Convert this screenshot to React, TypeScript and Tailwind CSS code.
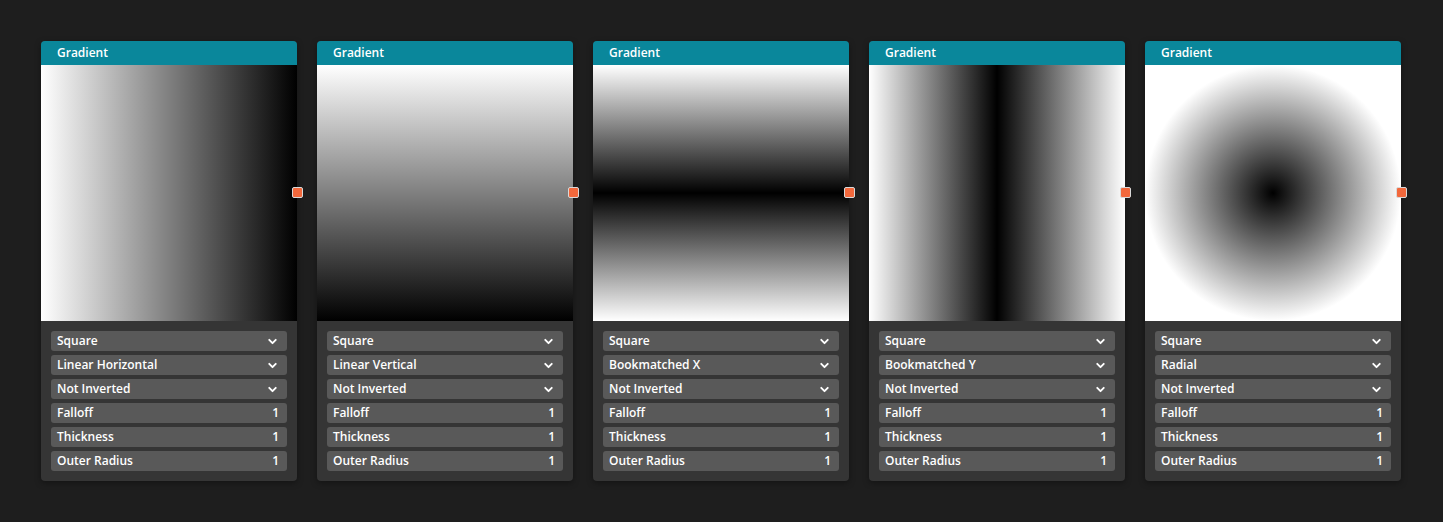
import { ChevronDown } from "lucide-react";

type Node = {
  shape: string;
  mode: string;
  preview: string;
};

const NODES: Node[] = [
  {
    shape: "Square",
    mode: "Linear Horizontal",
    preview: "bg-[linear-gradient(to_right,#ffffff,#000000)]",
  },
  {
    shape: "Square",
    mode: "Linear Vertical",
    preview: "bg-[linear-gradient(to_bottom,#ffffff,#000000)]",
  },
  {
    shape: "Square",
    mode: "Bookmatched X",
    preview: "bg-[linear-gradient(to_bottom,#ffffff,#000000_50%,#ffffff)]",
  },
  {
    shape: "Square",
    mode: "Bookmatched Y",
    preview: "bg-[linear-gradient(to_right,#ffffff,#000000_50%,#ffffff)]",
  },
  {
    shape: "Square",
    mode: "Radial",
    preview: "bg-[radial-gradient(circle_128px_at_center,#000000,#ffffff_100%)]",
  },
];

function SelectRow({ label }: { label: string }) {
  return (
    <div className="flex h-5 items-center justify-between rounded-[3px] bg-[#595959] pl-1.5 pr-2 text-white">
      <span>{label}</span>
      <ChevronDown size={13} strokeWidth={3.5} />
    </div>
  );
}

function ValueRow({ label, value }: { label: string; value: number }) {
  return (
    <div className="flex h-5 items-center justify-between rounded-[3px] bg-[#595959] pl-1.5 pr-2 text-white">
      <span>{label}</span>
      <span>{value}</span>
    </div>
  );
}

function GradientNode({ node }: { node: Node }) {
  return (
    <div className="relative w-64 shrink-0 rounded-[4px] bg-[#353535] shadow-[0_2px_6px_rgba(0,0,0,0.35)]">
      <div className="flex h-6 items-center rounded-t-[4px] bg-[#0a879b] px-4 text-xs font-semibold text-white">
        Gradient
      </div>
      <div className={`h-64 w-64 ${node.preview}`} />
      {/* output socket */}
      <div className="absolute right-[-6px] top-[146px] h-[11px] w-[11px] rounded-[2px] border border-[#d9d9d9] bg-[#f2683c]" />
      <div className="flex flex-col gap-1 px-2.5 pb-2.5 pt-2.5 text-xs font-semibold">
        <SelectRow label={node.shape} />
        <SelectRow label={node.mode} />
        <SelectRow label="Not Inverted" />
        <ValueRow label="Falloff" value={1} />
        <ValueRow label="Thickness" value={1} />
        <ValueRow label="Outer Radius" value={1} />
      </div>
    </div>
  );
}

export default function App() {
  return (
    <div
      className="flex h-[522px] w-full items-start gap-5 bg-[#1e1e1e] pl-[41px] pt-[41px]"
      style={{ fontFamily: "'Open Sans', 'Noto Sans', sans-serif" }}
    >
      {NODES.map((node, i) => (
        <GradientNode key={i} node={node} />
      ))}
    </div>
  );
}
